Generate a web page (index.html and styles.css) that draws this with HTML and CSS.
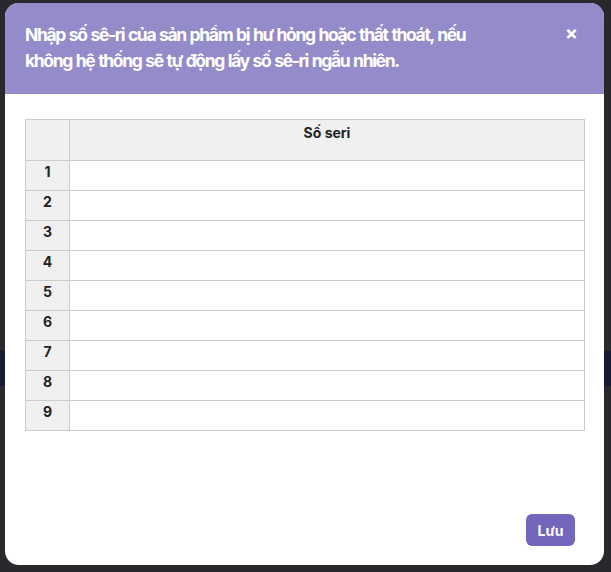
FILE: index.html
```html
<!DOCTYPE html>
<html lang="vi">
<head>
<meta charset="utf-8">
<title>Số seri</title>
<link rel="stylesheet" href="styles.css">
</head>
<body>
<div class="backdrop-band"></div>
<div class="modal">
  <div class="modal-header">
    <h2 class="modal-title">Nhập số sê-ri của sản phẩm bị hư hỏng hoặc thất thoát, nếu không hệ thống sẽ tự động lấy số sê-ri ngẫu nhiên.</h2>
    <button class="close-btn" aria-label="Đóng">×</button>
  </div>
  <div class="modal-body">
    <table class="serial-table">
      <thead>
        <tr><th class="idx"></th><th>Số seri</th></tr>
      </thead>
      <tbody>
        <tr><td class="idx">1</td><td></td></tr>
        <tr><td class="idx">2</td><td></td></tr>
        <tr><td class="idx">3</td><td></td></tr>
        <tr><td class="idx">4</td><td></td></tr>
        <tr><td class="idx">5</td><td></td></tr>
        <tr><td class="idx">6</td><td></td></tr>
        <tr><td class="idx">7</td><td></td></tr>
        <tr><td class="idx">8</td><td></td></tr>
        <tr><td class="idx">9</td><td></td></tr>
      </tbody>
    </table>
  </div>
  <div class="modal-footer">
    <button class="save-btn">Lưu</button>
  </div>
</div>
</body>
</html>
```
FILE: styles.css
```css
html, body {
  margin: 0;
  padding: 0;
}
body {
  background: #28292d;
  font-family: Inter, "Noto Sans", "Liberation Sans", sans-serif;
  width: 611px;
  height: 572px;
  overflow: hidden;
  position: relative;
}
.backdrop-band {
  position: absolute;
  left: 0;
  top: 351px;
  width: 611px;
  height: 35px;
  background: #161b33;
}
.modal {
  position: relative;
  margin: 3px 7px 0 5px;
  width: 599px;
  height: 562px;
  background: #ffffff;
  border-radius: 14px;
  overflow: hidden;
  display: flex;
  flex-direction: column;
}
.modal-header {
  background: #938bca;
  height: 91px;
  box-sizing: border-box;
  padding: 19px 100px 0 20px;
  position: relative;
}
.modal-title {
  margin: 0;
  color: #ffffff;
  font-size: 17.5px;
  font-weight: 700;
  letter-spacing: -1.35px;
  word-spacing: 1px;
  line-height: 26px;
}
.close-btn {
  position: absolute;
  top: 20px;
  right: 26px;
  background: none;
  border: none;
  color: #ffffff;
  font-family: Inter, "Liberation Sans", sans-serif;
  font-size: 19px;
  font-weight: 700;
  padding: 0;
  line-height: 22px;
}
.modal-body {
  flex: 1;
  padding: 25px 19px 0 20px;
}
.serial-table {
  width: 560px;
  border-collapse: collapse;
  font-size: 14px;
  color: #222;
}
.serial-table th,
.serial-table td {
  border: 1px solid #cccccc;
  vertical-align: top;
  padding: 5px 6px 0;
  text-align: center;
  font-weight: 700;
}
.serial-table thead th {
  background: #f0f0f0;
  height: 41px;
  padding-top: 4px;
  box-sizing: border-box;
}
.serial-table tbody td {
  height: 30px;
  box-sizing: border-box;
  padding-top: 2px;
}
.serial-table .idx {
  width: 44px;
  background: #f0f0f0;
  box-sizing: border-box;
}
.modal-footer {
  display: flex;
  justify-content: flex-end;
  padding: 0 29px 19px 0;
}
.save-btn {
  background: #7266bd;
  color: #ffffff;
  border: none;
  border-radius: 6px;
  width: 49px;
  height: 32px;
  font-family: Inter, "Liberation Sans", sans-serif;
  font-size: 14px;
  font-weight: 700;
  padding: 0;
}
```
